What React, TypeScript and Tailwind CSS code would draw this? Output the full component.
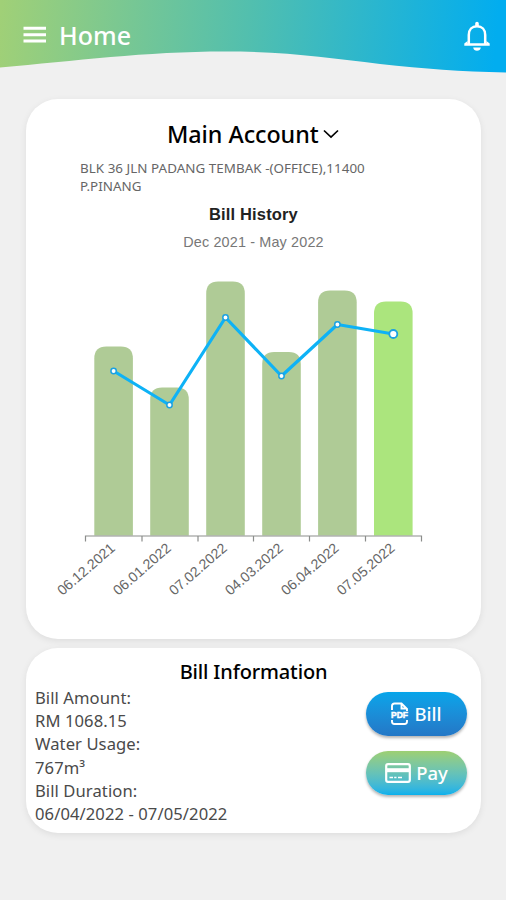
interface Bill {
  date: string;
  x: number;
  top: number;
  usage: number;
}

const bills: Bill[] = [
  { date: '06.12.2021', x: 113.6, top: 346.5, usage: 371 },
  { date: '06.01.2022', x: 169.5, top: 387.5, usage: 405 },
  { date: '07.02.2022', x: 225.5, top: 281.5, usage: 317.5 },
  { date: '04.03.2022', x: 281.5, top: 352, usage: 376 },
  { date: '06.04.2022', x: 337.4, top: 290.5, usage: 324.5 },
  { date: '07.05.2022', x: 393.3, top: 301.5, usage: 334 },
];

const ticks = [85.5, 142, 198, 253.5, 309.5, 365.5, 421.5];

const BASE = 535.5;

function Header() {
  return (
    <header className="relative h-[73px]">
      <svg className="absolute inset-0" width="506" height="73" viewBox="0 0 506 73">
        <defs>
          <linearGradient id="head" gradientUnits="userSpaceOnUse" x1="0" y1="20" x2="495" y2="60">
            <stop offset="0" stopColor="#a0d077" />
            <stop offset="0.5" stopColor="#52bfae" />
            <stop offset="1" stopColor="#02adef" />
          </linearGradient>
        </defs>
        <path
          d="M0 0H506V72.500C460 71.500 425 69 380 64C330 58 285 51.500 225 51.500C145 51.500 75 61 0 67.500Z"
          fill="url(#head)"
        />
      </svg>
      <div className="relative flex items-center pt-[17px] pl-[23px] pr-[15px] text-white">
        <svg width="23" height="18" viewBox="0 0 23 18" fill="currentColor">
          <path d="M0.500 0.800H23V3.800H0.500ZM0.500 7.200H23V10.200H0.500ZM0.500 13.600H23V16.600H0.500Z" />
        </svg>
        <h1 className="ml-[13px] text-[25px] leading-[36px] font-medium">Home</h1>
        <svg className="ml-auto mt-[2px]" width="28" height="32" viewBox="0 0 28 32" fill="none">
          <path
            d="M5.800 24V15C5.800 9.500 9 6.300 14 6.300S22.200 9.500 22.200 15V24"
            stroke="currentColor"
            strokeWidth="2.500"
          />
          <path
            d="M12.200 6V3.500A1.800 1.800 0 0 1 15.800 3.500V6ZM4.600 21L1.300 23.500V25.800H26.700V23.500L23.400 21V23.200H4.600ZM10.200 27.600H17.800C17.500 29.900 16 30.800 14 30.800S10.500 29.900 10.200 27.600Z"
            fill="currentColor"
          />
        </svg>
      </div>
    </header>
  );
}

function BillChart() {
  return (
    <svg className="block" width="455" height="345" viewBox="26 262 455 345">
      {bills.map((bill, i) => (
        <path
          key={bill.date}
          d={`M${bill.x - 19.3} ${BASE}V${bill.top + 12}q0 -12 12 -12h14.600q12 0 12 12V${BASE}Z`}
          fill={i === bills.length - 1 ? '#abe57d' : '#afcb96'}
        />
      ))}
      <path
        d={`M85 ${BASE + 0.5}H422${ticks.map((x) => `M${x} ${BASE}v6`).join('')}`}
        stroke="#8b8d8b"
        strokeWidth="1.200"
        fill="none"
      />
      <polyline
        points={bills.map((bill) => `${bill.x},${bill.usage}`).join(' ')}
        fill="none"
        stroke="#0eb2f6"
        strokeWidth="3.200"
        strokeLinejoin="round"
      />
      {bills.map((bill, i) => (
        <circle
          key={bill.date}
          cx={bill.x}
          cy={bill.usage}
          r={i === bills.length - 1 ? 4 : 2.7}
          fill="#fff"
          stroke="#1ba1e2"
          strokeWidth={i === bills.length - 1 ? 1.8 : 1.5}
        />
      ))}
      {bills.map((bill) => (
        <text
          key={bill.date}
          transform={`translate(${bill.x + 2.4} 549.500) rotate(-41)`}
          textAnchor="end"
          fontFamily="'Liberation Sans', Arial, sans-serif"
          fontSize="14.200"
          fill="#666"
        >
          {bill.date}
        </text>
      ))}
    </svg>
  );
}

function PdfIcon() {
  return (
    <svg width="19" height="24" viewBox="0 0 19 24" fill="none" stroke="currentColor" strokeWidth="1.900">
      <path d="M2 8V4Q2 1.500 4.500 1.500H11.500L17 7V9M11.500 1.500V6.500H17" />
      <path d="M2 18V19.500Q2 22 4.500 22H14.500Q17 22 17 19.500V18" />
      <text
        x="9.500"
        y="16.400"
        textAnchor="middle"
        fontFamily="'Liberation Sans', Arial, sans-serif"
        fontSize="9"
        fontWeight="700"
        fill="currentColor"
        strokeWidth="0.500"
        textLength="17"
        lengthAdjust="spacingAndGlyphs"
      >
        PDF
      </text>
    </svg>
  );
}

function CardIcon() {
  return (
    <svg width="26" height="20" viewBox="0 0 26 20" fill="none" stroke="currentColor">
      <rect x="1.200" y="1.200" width="23.600" height="17.600" rx="1.800" strokeWidth="2.200" />
      <path d="M1 7.200H25" strokeWidth="4" />
      <path d="M4.500 14.500H8M9.200 14.500H11.500M13 14.500H17" strokeWidth="1.600" />
    </svg>
  );
}

export default function App() {
  return (
    <div className="h-[900px] w-[506px] overflow-hidden bg-[#f0f0f0] font-['Noto_Sans',sans-serif] text-black">
      <Header />

      <main className="flex flex-col gap-[9px] pt-[26px] pl-[26px] pr-[25px]">
        <section className="h-[540px] rounded-[32px] bg-white pt-[19px] shadow-[0_2px_7px_rgba(0,0,0,0.08)]">
          <div className="flex items-center pl-[141px]">
            <h2 className="w-[152px] text-[23.3px] leading-[32px] font-medium tracking-[-0.05px] whitespace-nowrap">
              Main Account
            </h2>
            <svg className="ml-[4px]" width="16" height="10" viewBox="0 0 16 10" fill="none">
              <path d="M1 1.500L8 8L15 1.500" stroke="currentColor" strokeWidth="1.700" />
            </svg>
          </div>
          <p className="mt-[9px] pl-[54px] text-[13.4px] leading-[18px] tracking-[0.04px] text-[#666]">
            BLK 36 JLN PADANG TEMBAK -(OFFICE),11400
            <br />
            P.PINANG
          </p>
          <h3 className="mt-[8px] text-center font-['Liberation_Sans',sans-serif] text-[16.5px] leading-[22px] font-bold tracking-[0.15px] text-[#222]">
            Bill History
          </h3>
          <p className="mt-[8px] text-center font-['Liberation_Sans',sans-serif] text-[14.4px] leading-[18px] tracking-[0.15px] text-[#777]">
            Dec 2021 - May 2022
          </p>
          <div className="mt-[11px]">
            <BillChart />
          </div>
        </section>

        <section className="h-[185px] rounded-[32px] bg-white pt-[10px] shadow-[0_2px_7px_rgba(0,0,0,0.08)]">
          <h2 className="text-center text-[20px] leading-[28px] font-medium tracking-[-0.15px]">Bill Information</h2>
          <div className="flex justify-between pl-[9px] pr-[14px]">
            <div className="text-[16.6px] leading-[23.2px] tracking-[0.08px] whitespace-nowrap text-[#4a4a4a]">
              <p>Bill Amount:</p>
              <p>RM 1068.15</p>
              <p>Water Usage:</p>
              <p>767m³</p>
              <p>Bill Duration:</p>
              <p>06/04/2022 - 07/05/2022</p>
            </div>
            <div className="flex flex-col gap-[15px] pt-[6px] text-[18.5px] font-medium text-white">
              <button className="flex h-[44px] w-[101px] items-center justify-center gap-[5px] rounded-full bg-linear-to-b from-[#05a5ea] to-[#2377c6] pr-[1px] shadow-[0_2px_3px_rgba(0,0,0,0.3)]">
                <PdfIcon />
                Bill
              </button>
              <button className="flex h-[44px] w-[101px] items-center justify-center gap-[5px] rounded-full bg-linear-to-b from-[#9dcf72] to-[#05b0ec] shadow-[0_2px_3px_rgba(0,0,0,0.3)]">
                <CardIcon />
                Pay
              </button>
            </div>
          </div>
        </section>
      </main>
    </div>
  );
}
